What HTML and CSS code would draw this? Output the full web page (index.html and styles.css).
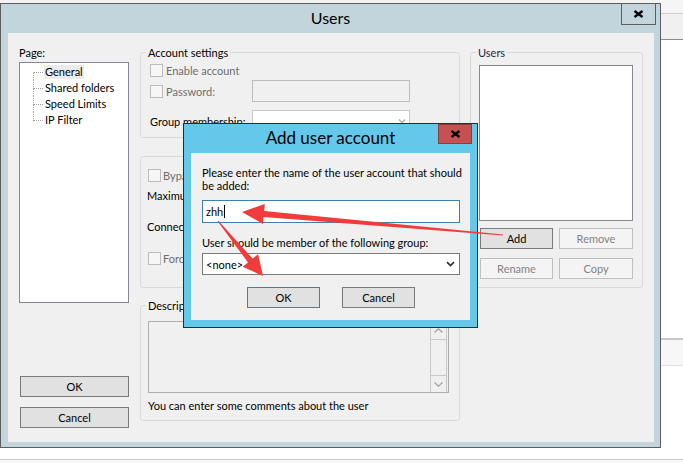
FILE: index.html
```html
<!DOCTYPE html>
<html lang="en">
<head>
<meta charset="utf-8">
<title>Users</title>
<link rel="stylesheet" href="styles.css">
</head>
<body>
<div class="screen">
  <div class="desk">
    <div class="window">
      <div class="titlebar">
        <div class="title">Users</div>
        <div class="close-btn"><svg class="x-icon" width="11" height="8" viewBox="0 0 11 8"><path d="M1.5 1 L9.5 7 M9.5 1 L1.5 7"/></svg></div>
      </div>
      <div class="panel">
        <div class="col-left">
          <div class="caption">Page:</div>
          <div class="tree">
            <div class="tree-item first"><span class="conn"><span class="c-top"></span><span class="c-bot"></span></span><span class="tree-label selected">General</span></div>
            <div class="tree-item"><span class="conn"><span class="c-top"></span><span class="c-bot"></span></span><span class="tree-label">Shared folders</span></div>
            <div class="tree-item"><span class="conn"><span class="c-top"></span><span class="c-bot"></span></span><span class="tree-label">Speed Limits</span></div>
            <div class="tree-item last"><span class="conn"><span class="c-top"></span><span class="c-bot"></span></span><span class="tree-label">IP Filter</span></div>
          </div>
          <div class="btn btn-main btn-main-ok">OK</div>
          <div class="btn btn-main btn-main-cancel">Cancel</div>
        </div>

        <div class="col-mid">
          <div class="group g-account">
            <div class="group-title">Account settings</div>
            <div class="row r1"><span class="chk"></span><span class="dis">Enable account</span></div>
            <div class="row r2"><span class="row-label"><span class="chk"></span><span class="dis">Password:</span></span><span class="field field-dis"></span></div>
            <div class="row r3"><span class="row-label">Group membership:</span><span class="field combo"><svg width="8" height="6" viewBox="0 0 8 6"><polyline class="chev-light" points="1,1.5 4,4.5 7,1.5"/></svg></span></div>
          </div>

          <div class="group g-limits">
            <div class="row ra"><span class="chk chk-b"></span><span class="dis">Bypass userlimit of server</span></div>
            <div class="row rb"><span class="lim-label">Maximum connection count:</span><span class="field field-small"></span></div>
            <div class="row rc"><span class="lim-label">Connection limit per IP:</span><span class="field field-small"></span></div>
            <div class="row rd"><span class="chk chk-b"></span><span class="dis">Force SSL for user login</span></div>
          </div>

          <div class="group g-desc">
            <div class="group-title">Description</div>
            <div class="desc-box">
              <div class="scroll">
                <div class="sb-up"><svg width="9" height="5" viewBox="0 0 9 5"><polyline class="chev-scroll" points="0.5,4.5 4.5,0.8 8.5,4.5"/></svg></div>
                <div class="sb-track"></div>
                <div class="sb-down"><svg width="9" height="5" viewBox="0 0 9 5"><polyline class="chev-scroll" points="0.5,0.5 4.5,4.2 8.5,0.5"/></svg></div>
              </div>
            </div>
            <div class="desc-note">You can enter some comments about the user</div>
          </div>
        </div>

        <div class="col-right">
          <div class="group g-users">
            <div class="group-title users-title">Users</div>
            <div class="listbox"></div>
            <div class="btn-row btn-row-1">
              <div class="btn btn-sm">Add</div>
              <div class="btn btn-sm btn-wide btn-dis">Remove</div>
            </div>
            <div class="btn-row btn-row-2">
              <div class="btn btn-sm btn-dis">Rename</div>
              <div class="btn btn-sm btn-wide btn-dis">Copy</div>
            </div>
          </div>
        </div>
      </div>
    </div>
  </div>

  <div class="side">
    <div class="s1"></div>
    <div class="s2"></div>
    <div class="s3"></div>
    <div class="s4"></div>
    <div class="s5"></div>
  </div>

  <div class="bottom"><div class="bottom-line"></div></div>

  <div class="dialog">
    <div class="dlg-titlebar">
      <div class="dlg-title">Add user account</div>
      <div class="dlg-close"><svg class="x-icon" width="11" height="8" viewBox="0 0 11 8"><path d="M1.5 1 L9.5 7 M9.5 1 L1.5 7"/></svg></div>
    </div>
    <div class="dlg-panel">
      <div class="dlg-text">Please enter the name of the user account that should<br>be added:</div>
      <div class="dlg-input"><span>zhh</span><span class="caret"></span></div>
      <div class="dlg-label">User should be member of the following group:</div>
      <div class="dlg-combo"><span>&lt;none&gt;</span><svg width="9" height="6" viewBox="0 0 9 6"><polyline class="chev-dark" points="1,1.2 4.5,4.6 8,1.2"/></svg></div>
      <div class="dlg-buttons">
        <div class="btn dlg-btn btn-default">OK</div>
        <div class="btn dlg-btn">Cancel</div>
      </div>
    </div>
  </div>

  <svg class="arrows" width="683" height="463" viewBox="0 0 683 463">
    <polygon points="242,212 264.8,203.9 264.2,210.9 503,234.5 503,235.5 263.6,216.9 263,223.9"/>
    <polygon points="263,276 258.1,254.2 252.6,258.6 218.4,220.7 217.6,221.3 248,262.4 242.6,266.8"/>
  </svg>
</div>
</body>
</html>
```

FILE: styles.css
```css
* { box-sizing: border-box; }
html, body { margin: 0; padding: 0; }
body {
  background: #fff;
  font-family: Lato, "Open Sans", "Liberation Sans", sans-serif;
  font-size: 11px;
  color: #000;
}

.screen {
  position: relative;
  width: 683px;
  height: 463px;
  overflow: hidden;
  display: grid;
  grid-template-columns: 661px 22px;
  grid-template-rows: 448px 15px;
}

/* ---------- main window ---------- */
.desk { padding-top: 3px; background: #f3f3f3; }
.window {
  height: 445px;
  border: 1px solid #5d5d5d;
  background: #c3d5dc;
  display: flex;
  flex-direction: column;
}
.titlebar {
  height: 29px;
  flex: none;
  display: grid;
  grid-template-columns: 1fr auto 1fr;
  align-items: start;
}
.title {
  grid-column: 2;
  padding-top: 4px;
  font-size: 16px;
  line-height: 20px;
}
.close-btn {
  grid-column: 3;
  justify-self: end;
  margin: -1px 4px 0 0;
  width: 35px;
  height: 22px;
  border: 1px solid #5d5d5d;
  display: flex;
  align-items: center;
  justify-content: center;
}
.x-icon path { stroke: #000; stroke-width: 2.3; fill: none; }

.panel {
  flex: 1;
  margin: 0 6px 5px 7px;
  background: #f0f0f0;
  display: flex;
  padding: 12px 0 0 11px;
}

/* left column */
.col-left { width: 110px; display: flex; flex-direction: column; }
.caption { line-height: 15px; }
.tree {
  margin-top: 2px;
  height: 241px;
  border: 1px solid #828790;
  background: #fff;
  padding-top: 1px;
}
.tree-item { display: flex; align-items: center; height: 16px; margin-left: 13px; }
.conn { width: 10px; height: 16px; display: flex; flex-direction: column; flex: none; }
.c-top { height: 9px; border-left: 1px dotted #a0a0a0; border-bottom: 1px dotted #a0a0a0; }
.c-bot { height: 7px; border-left: 1px dotted #a0a0a0; }
.first .c-top { border-left-color: transparent; }
.last .c-bot { border-left-color: transparent; }
.tree-label { margin-left: 1px; padding: 0 1px; line-height: 14px; white-space: nowrap; }
.tree-label.selected { background: #ebebeb; }

.btn {
  height: 21px;
  border: 1px solid #7a7a7a;
  background: #e1e1e1;
  text-align: center;
  line-height: 19px;
  white-space: nowrap;
}
.btn-main { width: 109px; margin-left: 1px; }
.btn-main-ok { margin-top: 73px; }
.btn-main-cancel { margin-top: 10px; }

/* middle column */
.col-mid { width: 320px; margin-left: 11px; display: flex; flex-direction: column; }
.group { border: 1px solid #d9d9d9; border-radius: 3px; flex: none; }
.group-title {
  width: max-content;
  margin: -8px 0 0 5px;
  padding: 0 2px;
  line-height: 15px;
  background: #f0f0f0;
}
.row { display: flex; align-items: center; white-space: nowrap; }

.g-account { margin-top: 7px; height: 86px; }
.g-account .row { margin-left: 9px; }
.r1 { height: 20px; }
.r2 { height: 22px; }
.r3 { height: 22px; margin-top: 8px; }
.row-label { width: 102px; flex: none; display: flex; align-items: center; }
.chk {
  width: 13px;
  height: 13px;
  border: 1px solid #bcbcbc;
  background: #f6f6f6;
  margin-right: 3px;
  flex: none;
}
.dis { color: #6d6d6d; }
.field { width: 158px; height: 22px; border: 1px solid #b9b9b9; background: #fff; flex: none; }
.field-dis { background: #f0f0f0; border-color: #bcbcbc; }
.combo {
  display: flex;
  align-items: center;
  justify-content: flex-end;
  padding-right: 3px;
  border-color: #c8c8c8;
}
.chev-light { fill: none; stroke: #b0b0b0; stroke-width: 1.4; }

.g-limits { margin-top: 18px; height: 132px; padding: 8px 0 0 7px; }
.ra { height: 20px; }
.rb { height: 21px; margin-left: -1px; }
.rc { height: 21px; margin-top: 10px; margin-left: -1px; }
.rd { height: 22px; margin-top: 10px; }
.chk-b { margin-right: 2px; }
.lim-label { width: 160px; flex: none; }
.field-small { width: 60px; }

.g-desc { margin-top: 17px; height: 116px; }
.desc-box {
  margin: 8px 0 0 7px;
  width: 301px;
  height: 72px;
  border: 1px solid #adadad;
  background: #f0f0f0;
  display: flex;
  justify-content: flex-end;
}
.scroll {
  width: 17px;
  margin-right: 1px;
  border-left: 1px solid #c8c8c8;
  border-right: 1px solid #c8c8c8;
  display: flex;
  flex-direction: column;
}
.sb-up, .sb-down { display: flex; align-items: center; justify-content: center; }
.sb-up { height: 18px; border-bottom: 1px solid #c8c8c8; }
.sb-track { flex: 1; }
.sb-down { height: 17px; border-top: 1px solid #c8c8c8; }
.chev-scroll { fill: none; stroke: #a0a0a0; stroke-width: 1.2; }
.desc-note { margin: 5px 0 0 7px; line-height: 15px; white-space: nowrap; }

/* right column */
.col-right { width: 173px; margin-left: 10px; }
.g-users { margin-top: 7px; height: 236px; }
.users-title { color: #1c1c48; }
.listbox {
  margin: 5px 0 0 8px;
  width: 154px;
  height: 156px;
  border: 1px solid #828790;
  background: #fff;
}
.btn-row { display: flex; gap: 6px; margin-left: 9px; }
.btn-row-1 { margin-top: 7px; }
.btn-row-2 { margin-top: 9px; }
.btn-sm { width: 73px; }
.btn-wide { width: 74px; }
.btn-dis { background: #f4f4f4; border-color: #bfbfbf; color: #838383; }

/* ---------- background strips ---------- */
.side { display: flex; flex-direction: column; background: #fff; }
.s1 { height: 14px; background: #f5f5f5; border-bottom: 1px solid #d0d0d0; }
.s2 { height: 26px; background: #f0f0f0; border-bottom: 1px solid #8c8c8c; }
.s3 { height: 300px; background: #fff; border-bottom: 2px solid #c8c8c8; }
.s4 { height: 26px; background: #f7f7f7; border-bottom: 1px solid #e0e0e0; }
.s5 { flex: 1; background: #fff; }
.bottom { grid-column: 1 / 3; background: #fff; }
.bottom-line { margin-top: 11px; height: 4px; border-top: 1px solid #c8c8c8; background: #f6f6f6; }

/* ---------- dialog ---------- */
.dialog {
  position: absolute;
  left: 183px;
  top: 123px;
  width: 295px;
  height: 205px;
  border: 1px solid #2b2b2b;
  background: #63c8ea;
  display: flex;
  flex-direction: column;
  z-index: 2;
}
.dlg-titlebar {
  height: 29px;
  flex: none;
  display: grid;
  grid-template-columns: 1fr auto 1fr;
  align-items: start;
}
.dlg-title {
  grid-column: 2;
  padding-top: 4px;
  font-size: 17px;
  line-height: 20px;
  white-space: nowrap;
}
.dlg-close {
  grid-column: 3;
  justify-self: end;
  margin-right: 5px;
  width: 34px;
  height: 20px;
  background: #c75050;
  border: 1px solid #8f3b3b;
  display: flex;
  align-items: center;
  justify-content: center;
}
.dlg-panel {
  flex: 1;
  margin: 0 7px 7px;
  background: #f0f0f0;
  padding: 13px 10px 0 11px;
  display: flex;
  flex-direction: column;
}
.dlg-text { line-height: 13px; white-space: nowrap; }
.dlg-input {
  margin-top: 8px;
  height: 23px;
  border: 1px solid #3c7fb1;
  background: #fff;
  display: flex;
  align-items: center;
  padding-left: 3px;
}
.caret { width: 1px; height: 13px; background: #000; margin-left: 1px; }
.dlg-label { margin-top: 13px; line-height: 13px; white-space: nowrap; }
.dlg-combo {
  margin-top: 4px;
  height: 22px;
  border: 1px solid #7a7a7a;
  background: #fff;
  display: flex;
  align-items: center;
  justify-content: space-between;
  padding: 0 4px 0 3px;
}
.chev-dark { fill: none; stroke: #333; stroke-width: 1.7; }
.dlg-buttons { margin-top: 12px; display: flex; justify-content: center; gap: 22px; }
.dlg-btn { width: 73px; }
.btn-default { border-color: #3c7fb1; }

/* ---------- annotation arrows ---------- */
.arrows { position: absolute; left: 0; top: 0; z-index: 3; pointer-events: none; }
.arrows polygon { fill: #f23b3b; }
```
